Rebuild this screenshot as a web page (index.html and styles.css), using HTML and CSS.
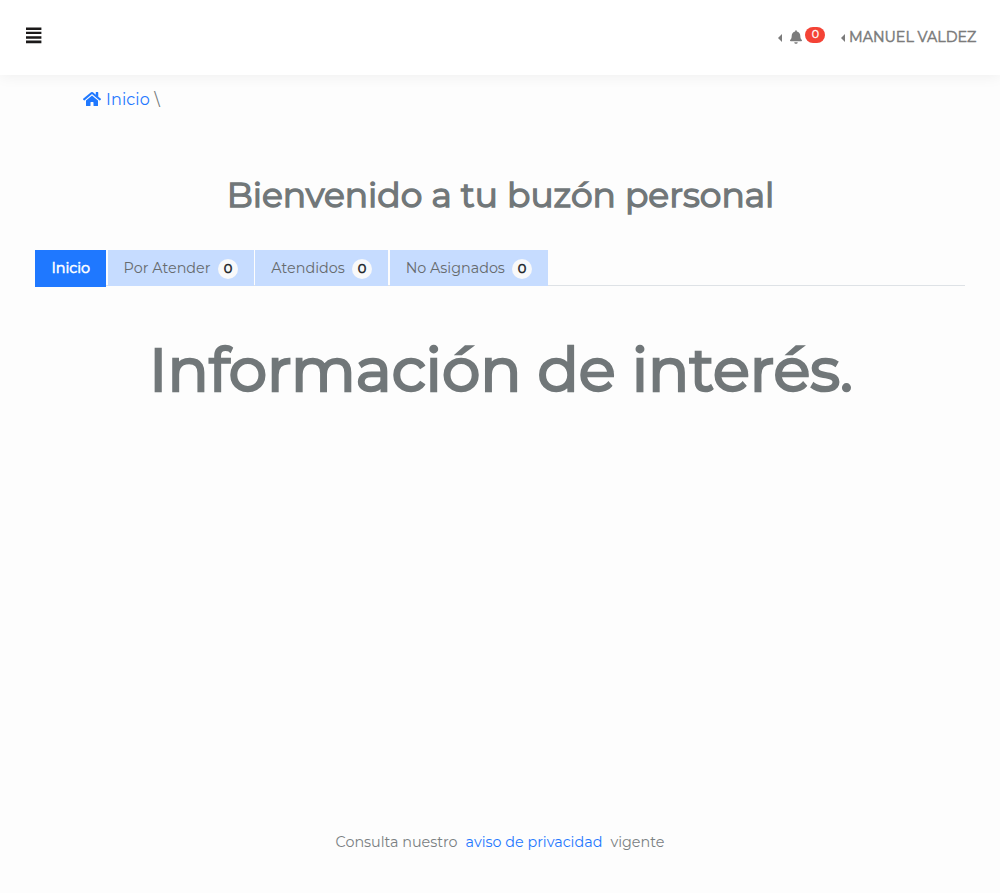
FILE: index.html
```html
<!DOCTYPE html>
<html lang="es">
<head>
<meta charset="utf-8">
<title>Buzón personal</title>
<link rel="stylesheet" href="styles.css">
</head>
<body>
<header class="topbar">
  <button class="menu" aria-label="Menú">
    <svg width="16" height="18" viewBox="0 0 16 18"><path d="M0 1.6h15.4V4H0zM0 5.7h15.4v2.4H0zM0 10.3h15.4V12.8H0zM0 14.6h15.4v2.7H0z"/></svg>
  </button>
  <nav class="user-nav">
    <a class="alerts">
      <i class="caret"></i>
      <svg class="bell" viewBox="0 0 448 512"><path d="M224 512c35.32 0 63.97-28.65 63.97-64H160.03c0 35.35 28.65 64 63.97 64zm215.39-149.71c-19.32-20.76-55.47-51.99-55.47-154.29 0-77.7-54.48-139.9-127.94-155.16V32c0-17.67-14.32-32-31.98-32s-31.98 14.33-31.98 32v20.84C118.56 68.1 64.08 130.3 64.08 208c0 102.3-36.15 133.53-55.47 154.29-6 6.45-8.66 14.16-8.61 21.71.11 16.4 12.98 32 32.1 32h383.8c19.12 0 32-15.6 32.1-32 .05-7.55-2.61-15.27-8.61-21.71z"/></svg>
      <span class="alert-count">0</span>
    </a>
    <a class="account"><i class="caret"></i><span class="name">MANUEL VALDEZ</span></a>
  </nav>
</header>
<main>
  <div class="breadcrumb">
    <svg class="home" viewBox="0 0 576 512"><path d="M280.37 148.26L96 300.11V464a16 16 0 0 0 16 16l112.06-.29a16 16 0 0 0 15.92-16V368a16 16 0 0 1 16-16h64a16 16 0 0 1 16 16v95.64a16 16 0 0 0 16 16.05L464 480a16 16 0 0 0 16-16V300L295.67 148.26a12.19 12.19 0 0 0-15.3 0zM571.6 251.47L488 182.56V44.05a12 12 0 0 0-12-12h-56a12 12 0 0 0-12 12v72.61L318.47 43a48 48 0 0 0-61 0L4.34 251.47a12 12 0 0 0-1.6 16.9l25.5 31A12 12 0 0 0 45.15 301l235.22-193.74a12.19 12.19 0 0 1 15.3 0L530.9 301a12 12 0 0 0 16.9-1.6l25.5-31a12 12 0 0 0-1.7-16.93z"/></svg>
    <a class="crumb">Inicio</a><span class="slash">\</span>
  </div>
  <h2 class="welcome">Bienvenido a tu buzón personal</h2>
  <div class="tabs">
    <a class="tab active">Inicio</a>
    <a class="tab pending">Por Atender<b class="count">0</b></a>
    <a class="tab done">Atendidos<b class="count">0</b></a>
    <a class="tab open">No Asignados<b class="count">0</b></a>
  </div>
  <h1 class="info">Información de interés.</h1>
</main>
<footer class="footer"><span>Consulta nuestro</span><a class="privacy">aviso de privacidad</a><span>vigente</span></footer>
</body>
</html>
```
FILE: styles.css
```css
* { box-sizing: border-box; }
body {
  margin: 0;
  height: 893px;
  display: flex;
  flex-direction: column;
  overflow: hidden;
  background: #fdfdfd;
  color: #717779;
  font: 400 14.35px/20px Montserrat, Inter, sans-serif;
  white-space: nowrap;
}
.topbar {
  height: 75px;
  flex: none;
  display: flex;
  justify-content: space-between;
  padding: 26px 23px 0 26px;
  background: #fff;
  box-shadow: 0 0 15px rgba(0, 0, 0, .07);
}
.menu { height: 18px; padding: 0; border: 0; background: none; }
.menu svg { display: block; fill: #1b1919; }
.user-nav { display: flex; gap: 16px; color: #7b7b7b; }
.alerts, .account { display: flex; align-items: flex-start; }
.caret {
  margin-top: 8px;
  border: 4px solid transparent;
  border-right-color: #7b7b7b;
  border-left: 0;
}
.bell { width: 12px; height: 14px; margin: 4px 3px 0 8px; fill: #7b7b7b; }
.alert-count {
  width: 20px;
  height: 16px;
  margin-top: 1px;
  padding-left: 1px;
  border-radius: 8px;
  background: #f44336;
  color: #fff;
  font-size: 11px;
  line-height: 15px;
  text-align: center;
  -webkit-text-stroke: .3px;
}
.name { width: 128px; margin-left: 4px; line-height: 22px; font-size: 14.3px; -webkit-text-stroke: .5px; }
main { flex: 1; padding: 0 35px; }
.breadcrumb { display: flex; height: 20px; margin: 14px 0 0 48px; font-size: 16px; line-height: 21px; }
.home { width: 18px; height: 16px; margin: 2px 5px 0 0; fill: #1f78ff; }
.crumb { width: 48.4px; color: #1f78ff; letter-spacing: .12px; }
.welcome {
  margin: 65px 0 0;
  padding-left: 1px;
  font-size: 34.5px;
  line-height: 42px;
  font-weight: 400;
  text-align: center;
  -webkit-text-stroke: 1.4px;
}
.tabs { display: flex; align-items: flex-start; height: 36px; margin-top: 34px; border-bottom: 1px solid #dee2e6; }
.tab { display: flex; align-items: center; height: 36px; padding: 0 16px; background: #c6dcff; color: #666b6e; }
.active { width: 71px; height: 37px; margin-right: 2px; padding: 0 0 1px 16.4px; background: #1f78ff; color: #fff; -webkit-text-stroke: .57px; }
.pending { width: 146px; margin-right: 1px; padding-left: 15.6px; }
.done { width: 133px; margin-right: 2px; padding-left: 16.3px; }
.open { width: 158px; padding-left: 15.7px; }
.count {
  width: 20px;
  height: 20px;
  margin: 2px 0 0 auto;
  border-radius: 10px;
  background: #f8f9fa;
  color: #212529;
  font-size: 13px;
  line-height: 19px;
  font-weight: 400;
  text-align: center;
  -webkit-text-stroke: .55px;
}
.info {
  margin: 45px 0 0;
  padding-left: 2px;
  font-size: 61px;
  line-height: 76px;
  font-weight: 400;
  text-align: center;
  -webkit-text-stroke: 2.6px;
}
.footer { display: flex; justify-content: center; gap: 8px; height: 61px; color: #7a8082; }
.privacy { color: #1f78ff; }
```
